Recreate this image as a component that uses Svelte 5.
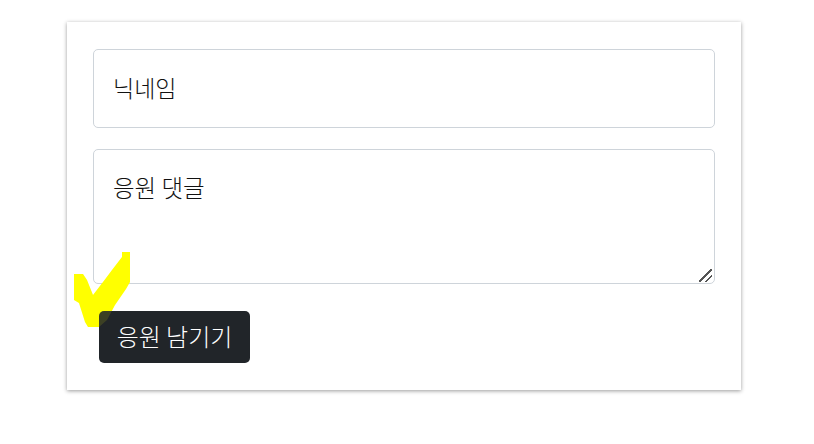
<script>
	let nickname = $state('');
	let comment = $state('');

	const checkPath =
		'M0 24 L9 24 L13 30 L19 45 L29 32 L38 20 L48 7 L48 2 L56 2 L56 32 L52 39 L41 55 L33 70 L25 77 L14 77 L11 72 L5 53 L0 50 Z';
</script>

<div class="page">
	<form class="card" onsubmit={(e) => e.preventDefault()}>
		<input class="field" type="text" placeholder="닉네임" bind:value={nickname} />
		<textarea class="field area" placeholder="응원 댓글" bind:value={comment}></textarea>
		<svg class="check" width="60" height="80" viewBox="0 0 60 80" aria-hidden="true">
			<path d={checkPath} />
		</svg>
		<button class="submit" type="submit">응원 남기기</button>
		<!-- faint part of the mark that shows through on the button corner -->
		<svg class="check tint" width="60" height="80" viewBox="0 0 60 80" aria-hidden="true">
			<path d={checkPath} />
		</svg>
	</form>
</div>

<style>
	:global(body) {
		margin: 0;
		background: #fff;
	}
	.page {
		padding: 22px 0 54px 67px;
	}
	.card {
		position: relative;
		box-sizing: border-box;
		width: 674px;
		height: 368px;
		padding: 27px 26px;
		display: flex;
		flex-direction: column;
		background: #fff;
		box-shadow: 0 1px 4px rgba(0, 0, 0, 0.4);
		font-family: 'Noto Sans CJK KR', 'Noto Sans', sans-serif;
		font-weight: 300;
	}
	.field {
		box-sizing: border-box;
		width: 100%;
		height: 79px;
		margin: 0 0 21px;
		padding: 4px 19px 8px;
		font: inherit;
		font-size: 23px;
		color: #111;
		background: #fff;
		border: 1px solid #ced4da;
		border-radius: 5px;
		outline: none;
	}
	.field::placeholder {
		color: #111;
		opacity: 1;
	}
	.area {
		height: 135px;
		margin-bottom: 27px;
		padding-top: 20px;
		font-size: 23.5px;
		display: block;
	}
	.area::-webkit-resizer {
		background: linear-gradient(
				135deg,
				transparent 46%,
				#555 46% 54%,
				transparent 54% 71%,
				#555 71% 79%,
				transparent 79%
			)
			0 1px / 13px 13px no-repeat;
	}
	.submit {
		position: relative;
		align-self: flex-start;
		width: 151px;
		height: 52px;
		margin-left: 6px;
		padding: 0 0 4px;
		font: inherit;
		font-size: 24px;
		color: #fff;
		background: #212529;
		border: 0;
		border-radius: 5px;
	}
	.check {
		position: absolute;
		left: 7px;
		top: 228px;
		pointer-events: none;
	}
	.check path {
		fill: #ffff00;
	}
	.tint {
		opacity: 0.12;
	}
</style>
